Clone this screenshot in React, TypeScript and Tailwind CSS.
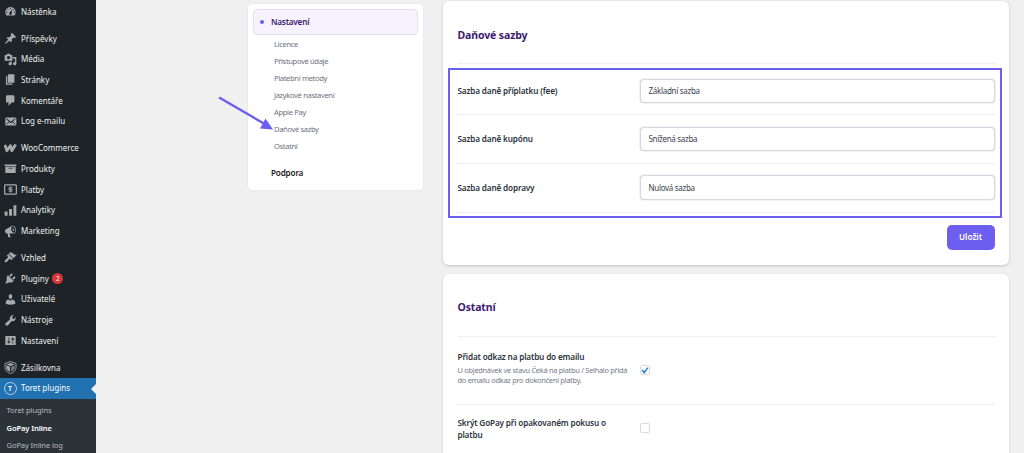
import type { ReactNode } from 'react';

const icons: Record<string, ReactNode> = {
  dashboard: (
    <path fillRule="evenodd" d="M3.76 16h12.48c1.1-1.37 1.76-3.11 1.76-5 0-4.42-3.58-8-8-8s-8 3.58-8 8c0 1.89.66 3.63 1.76 5zM10 4c.55 0 1 .45 1 1s-.45 1-1 1-1-.45-1-1 .45-1 1-1zM6 6c.55 0 1 .45 1 1s-.45 1-1 1-1-.45-1-1 .45-1 1-1zm8 0c.55 0 1 .45 1 1s-.45 1-1 1-1-.45-1-1 .45-1 1-1zm-5.37 5.55L12 7v6c0 1.1-.9 2-2 2s-2-.9-2-2c0-.57.24-1.08.63-1.45zM4 10c.55 0 1 .45 1 1s-.45 1-1 1-1-.45-1-1 .45-1 1-1zm12 0c.55 0 1 .45 1 1s-.45 1-1 1-1-.45-1-1 .45-1 1-1z" />
  ),
  pin: (
    <path d="M10.44 3.02l1.82-1.82 6.36 6.35-1.83 1.82c-1.05-.68-2.48-.57-3.41.36l-.75.75c-.92.93-1.04 2.35-.35 3.41l-1.83 1.82-2.41-2.41-2.8 2.79c-.42.42-3.38 2.71-3.8 2.29s1.86-3.39 2.28-3.81l2.79-2.79L4.1 9.36l1.83-1.82c1.05.69 2.48.57 3.4-.36l.75-.75c.93-.92 1.05-2.35.36-3.41z" />
  ),
  media: (
    <path fillRule="evenodd" d="M13 11V4c0-.55-.45-1-1-1h-1.67L9 1H5L3.67 3H2c-.55 0-1 .45-1 1v7c0 .55.45 1 1 1h10c.55 0 1-.45 1-1zM7 4.5c1.38 0 2.5 1.12 2.5 2.5S8.38 9.5 7 9.5 4.5 8.38 4.5 7 5.62 4.5 7 4.5zM14 6h5v10.5c0 1.38-1.12 2.5-2.5 2.5S14 17.88 14 16.5s1.12-2.5 2.5-2.5c.17 0 .34.02.5.05V9h-3V6zm-4 8.05V13h2v3.5c0 1.38-1.12 2.5-2.5 2.5S7 17.88 7 16.5 8.12 14 9.5 14c.17 0 .34.02.5.05z" />
  ),
  page: <path d="M6 15V2h10v13H6zm-1 1h8v2H3V5h2v11z" />,
  comment: <path d="M5 2h9c1.1 0 2 .9 2 2v7c0 1.1-.9 2-2 2h-2l-5 5v-5H5c-1.1 0-2-.9-2-2V4c0-1.1.9-2 2-2z" />,
  email: (
    <path fillRule="evenodd" d="M19 14.5v-9c0-.83-.67-1.5-1.5-1.5H3.49c-.83 0-1.5.67-1.5 1.5v9c0 .83.67 1.5 1.5 1.5H17.5c.83 0 1.5-.67 1.5-1.5zm-1.31-9.11c.33.33.15.67-.03.84L13.6 9.95l3.9 4.06c.12.14.2.36.06.51-.13.16-.43.15-.56.05l-4.37-3.73-2.14 1.95-2.13-1.95-4.37 3.73c-.13.1-.43.11-.56-.05-.14-.15-.06-.37.06-.51l3.9-4.06-4.06-3.72c-.18-.17-.36-.51-.03-.84s.67-.17.95.07l6.24 5.04 6.25-5.04c.28-.24.62-.4.95-.07z" />
  ),
  woo: (
    <g fill="none" stroke="currentColor" strokeWidth="4.2" strokeLinejoin="round">
      <path d="M1.5 4.5L4.5 13.5l5.5-8L12 13.5l6-9.5" />
    </g>
  ),
  archive: <path fillRule="evenodd" d="M19 4v2H1V4h18zM2 7h16v10H2V7zm11 3V9H7v1h6z" />,
  money: (
    <>
      <rect x="1" y="3" width="18" height="14" rx="1" fill="none" stroke="currentColor" strokeWidth="1.9" />
      <path fill="none" stroke="currentColor" strokeWidth="1.8" d="M12.8 7.4H9a1.3 1.3 0 0 0 0 2.6h2a1.3 1.3 0 0 1 0 2.6H7.2M10 5.5v2M10 12.5v2" />
    </>
  ),
  chart: <path d="M1 11.5h4.5V18H1zM7.8 7.5h4.5V18H7.8zM14.6 2H19v16h-4.4z" />,
  megaphone: (
    <path fillRule="evenodd" d="M18.15 5.94c.46 1.62.38 3.22-.02 4.48-.42 1.28-1.26 2.18-2.3 2.48-.3.08-.7.1-1.02.1h-6.8l2.22 5.5c.02.14-.06.26-.14.34-.08.1-.24.16-.34.16H6.95c-.1 0-.26-.06-.34-.16-.08-.08-.16-.2-.14-.34l-1-5.5H4.25c-.5.06-1.08-.2-1.56-.64s-.88-1.08-1.06-1.88c-.24-.8-.2-1.56-.02-2.2.18-.62.58-1.08 1.08-1.32l9-5.4c.3-.2.6-.38.98-.46 1.04-.3 2.24.1 3.22.98s1.84 2.24 2.26 3.86zm-2.58 5.98c.4-.1.74-.34 1.02-.7.58-.7.86-1.76.86-3.04 0-.64-.1-1.3-.28-1.98-.34-1.36-1.02-2.5-1.78-3.24s-1.68-1.1-2.46-.88c-.82.22-1.4.96-1.7 2-.32 1.04-.28 2.36.06 3.72.38 1.36 1 2.5 1.8 3.24.78.74 1.62 1.1 2.48.88zM13 5.5c1.2-.3 2.2.4 2.5 1.6s-.2 2.3-1.3 2.6z" />
  ),
  brush: (
    <path d="M14.48 11.06L7.41 3.99l1.5-1.5c.5-.56 2.3-.47 3.51.32 1.21.8 1.43 1.28 2.91 2.1 1.18.64 2.45 1.26 4.45.85zm-.71.71L6.7 4.7 4.93 6.47c-.39.39-.39 1.02 0 1.41l1.06 1.06c.39.39.39 1.03 0 1.42-.6.6-1.43 1.11-2.21 1.69-.35.26-.7.53-1.01.84C1.43 14.23.4 16.08 1.4 17.07c.99 1 2.84-.03 4.18-1.36.31-.31.58-.66.85-1.02.57-.78 1.08-1.61 1.69-2.21.39-.39 1.02-.39 1.41 0l1.06 1.06c.39.39 1.02.39 1.41 0z" />
  ),
  plug: (
    <path d="M13.11 4.36L9.87 7.6 8 5.73l3.24-3.24c.35-.34 1.05-.2 1.56.32.52.51.66 1.21.31 1.55zm-8 1.77l.91-1.12 9.01 9.01-1.19.84c-.71.71-2.63 1.16-3.82 1.16H6.14L4.9 17.26c-.59.59-1.54.59-2.12 0-.59-.58-.59-1.53 0-2.12l1.24-1.24v-3.88c0-1.13.4-3.19 1.09-3.89zm7.26 3.97l3.24-3.24c.34-.35 1.04-.21 1.55.31.52.51.66 1.21.31 1.55l-3.24 3.25z" />
  ),
  user: (
    <path d="M10 9.25c-2.27 0-2.73-3.44-2.73-3.44C7 4.02 7.82 2 9.97 2c2.16 0 2.98 2.02 2.71 3.81 0 0-.41 3.44-2.68 3.44zm0 2.57L12.72 10c2.39 0 4.52 2.33 4.52 4.53v2.49s-3.65 1.13-7.24 1.13c-3.65 0-7.24-1.13-7.24-1.13v-2.49c0-2.25 1.94-4.48 4.47-4.48z" />
  ),
  wrench: (
    <path d="M16.68 9.77c-1.34 1.34-3.3 1.67-4.95.99l-5.41 6.52c-.99.99-2.59.99-3.58 0s-.99-2.59 0-3.57l6.52-5.42c-.68-1.65-.35-3.61.99-4.95 1.28-1.28 3.12-1.62 4.72-1.06l-2.89 2.89 2.82 2.82 2.86-2.87c.53 1.58.18 3.39-1.08 4.65z" />
  ),
  settings: (
    <path fillRule="evenodd" d="M18 16V4c0-.55-.45-1-1-1H3c-.55 0-1 .45-1 1v12c0 .55.45 1 1 1h14c.55 0 1-.45 1-1zM8 11h1c.55 0 1 .45 1 1s-.45 1-1 1H8v1.5c0 .28-.22.5-.5.5s-.5-.22-.5-.5V13H6c-.55 0-1-.45-1-1s.45-1 1-1h1V5.5c0-.28.22-.5.5-.5s.5.22.5.5V11zm5-2h-1c-.55 0-1-.45-1-1s.45-1 1-1h1V5.5c0-.28.22-.5.5-.5s.5.22.5.5V7h1c.55 0 1 .45 1 1s-.45 1-1 1h-1v5.5c0 .28-.22.5-.5.5s-.5-.22-.5-.5V9z" />
  ),
  shield: (
    <>
      <path fill="none" stroke="currentColor" strokeWidth="1.4" d="M10 .8l8.5 3v6.5c0 4-3.5 7-8.5 9.2-5-2.2-8.5-5.2-8.5-9.2V3.8z" />
      <path d="M10 3l6.2 2.2L10 7.6 3.8 5.2zM3.5 6.5l5.7 2.2v8C5.5 14.8 3.5 12.6 3.5 10z" />
      <path opacity=".6" d="M16.5 6.5l-5.7 2.2v8c3.7-1.9 5.7-4.1 5.7-6.7z" />
    </>
  ),
};

interface MenuItem {
  label: string;
  icon: string;
  badge?: number;
}

const menuGroups: MenuItem[][] = [
  [{ label: 'Nástěnka', icon: 'dashboard' }],
  [
    { label: 'Příspěvky', icon: 'pin' },
    { label: 'Média', icon: 'media' },
    { label: 'Stránky', icon: 'page' },
    { label: 'Komentáře', icon: 'comment' },
    { label: 'Log e-mailu', icon: 'email' },
  ],
  [
    { label: 'WooCommerce', icon: 'woo' },
    { label: 'Produkty', icon: 'archive' },
    { label: 'Platby', icon: 'money' },
    { label: 'Analytiky', icon: 'chart' },
    { label: 'Marketing', icon: 'megaphone' },
  ],
  [
    { label: 'Vzhled', icon: 'brush' },
    { label: 'Pluginy', icon: 'plug', badge: 2 },
    { label: 'Uživatelé', icon: 'user' },
    { label: 'Nástroje', icon: 'wrench' },
    { label: 'Nastavení', icon: 'settings' },
  ],
];

const sections = ['Licence', 'Přístupové údaje', 'Platební metody', 'Jazykové nastavení', 'Apple Pay', 'Daňové sazby', 'Ostatní'];

const taxRates = [
  { label: 'Sazba daně příplatku (fee)', value: 'Základní sazba' },
  { label: 'Sazba daně kupónu', value: 'Snížená sazba' },
  { label: 'Sazba daně dopravy', value: 'Nulová sazba' },
];

function Icon({ name }: { name: string }) {
  return (
    <svg viewBox="0 0 20 20" fill="currentColor" className="h-[13px] w-[13px] shrink-0 text-[#a7aaad]">
      {icons[name]}
    </svg>
  );
}

function SidebarItem({ label, icon, badge }: MenuItem) {
  return (
    <li className="flex h-[20.7px] items-center gap-[4.5px] pl-[3.5px] text-[8px] text-[#f0f0f1]">
      <Icon name={icon} />
      <span>{label}</span>
      {badge && (
        <span className="-ml-px flex h-[11px] w-[11px] items-center justify-center rounded-full bg-[#d63638] text-[6.5px] text-white">
          {badge}
        </span>
      )}
    </li>
  );
}

function Sidebar() {
  return (
    <aside className="flex w-24 shrink-0 flex-col bg-[#1d2327] pt-[1.2px]">
      <div className="flex flex-col gap-[6.3px]">
        {menuGroups.map((group) => (
          <ul key={group[0].label}>
            {group.map((item) => (
              <SidebarItem key={item.label} {...item} />
            ))}
          </ul>
        ))}
        <ul>
          <SidebarItem label="Zásilkovna" icon="shield" />
          <li className="relative flex h-[20.7px] items-center gap-[4.5px] bg-[#2271b1] pl-[3.5px] text-[8px] text-white">
            <span className="flex h-[13px] w-[13px] items-center justify-center rounded-full border border-[#b9d6ee] text-[7px] leading-none font-semibold">T</span>
            <span>Toret plugins</span>
            <span className="absolute right-0 top-[5.5px] border-y-[5px] border-r-[5px] border-y-transparent border-r-[#f0f0f1]" />
          </li>
        </ul>
      </div>
      <ul className="flex-1 bg-[#2c3338] pl-[6.5px] pt-[3.8px] text-[7.6px] tracking-[-0.12px] text-[#b4b9be]">
        <li className="flex h-[17.2px] items-center">Toret plugins</li>
        <li className="flex h-[17.2px] items-center font-semibold text-white">GoPay Inline</li>
        <li className="flex h-[17.2px] items-center">GoPay Inline log</li>
      </ul>
    </aside>
  );
}

function SettingsNav() {
  return (
    <nav className="mt-1 h-[186px] w-[175px] shrink-0 rounded-[4px] bg-white px-[5px] pt-[5px] shadow-[0_0_2px_rgba(0,0,0,0.08)]">
      <div className="flex h-[26px] items-center rounded-[4px] border border-[#e4defc] bg-[#f6f3fe] pl-[6.5px] text-[8.2px] font-semibold tracking-[-0.22px] text-[#3b1a6e]">
        <span className="mr-[7px] h-1 w-1 rounded-full bg-[#6c5ff0]" />
        Nastavení
      </div>
      <ul className="pl-[21.5px] pt-[1.2px] text-[7.6px] tracking-[-0.36px] text-[#6c7383]">
        {sections.map((section) => (
          <li key={section} className="flex h-[16.95px] items-center">{section}</li>
        ))}
      </ul>
      <div className="mt-[12px] pl-[18.5px] text-[8.2px] font-semibold tracking-[-0.2px] text-[#222]">Podpora</div>
    </nav>
  );
}

function Checkbox({ checked }: { checked?: boolean }) {
  return (
    <span className="flex h-[10px] w-[10px] items-center justify-center rounded-[2px] border border-[#d9dbe0] bg-white">
      {checked && (
        <svg viewBox="0 0 20 20" className="h-[11px] w-[11px] shrink-0" fill="#2583d0">
          <path d="M15.2 3.9l2 1.4-6.9 10.2H8.6L4.5 10l1.7-1.7 3.2 3z" />
        </svg>
      )}
    </span>
  );
}

export default function App() {
  return (
    <div className="flex h-[453px] w-[1024px] overflow-hidden bg-[#f0f0f1] font-['Noto_Sans','Open_Sans',sans-serif]">
      <Sidebar />
      <main className="relative flex flex-1 items-start pl-[151.5px]">
        <SettingsNav />
        <div className="ml-[20.5px] w-[566px] shrink-0">
          <section className="mt-px h-[264px] rounded-[6px] bg-white px-[14.5px] shadow-[0_1px_3px_rgba(0,0,0,0.2)]">
            <h2 className="flex h-[63px] items-center border-b border-[#eeeff1] pt-[7px] text-[10.5px] font-bold tracking-[-0.12px] text-[#3b1a6e]">
              Daňové sazby
            </h2>
            <div className="-ml-[10px] -mr-[7.5px] mt-[3.5px] h-[150.5px] border-2 border-[#6c5ff0] pl-2 pr-[5.5px]">
              {taxRates.map((rate) => (
                <div key={rate.label} className="flex h-[48.8px] items-center border-b border-[#eeeff1] first:h-[45.5px] first:pb-[2px]">
                  <span className="w-[182.5px] text-[8.2px] font-semibold tracking-[-0.16px] text-[#2c3340]">{rate.label}</span>
                  <div className="flex h-[24.5px] flex-1 items-center rounded-[4px] border border-[#d5d8de] bg-white px-[7.5px] text-[8px] tracking-[-0.3px] text-[#3c434a] shadow-[0_0_1.5px_rgba(0,0,0,0.25)]">
                    {rate.value}
                  </div>
                </div>
              ))}
            </div>
            <div className="flex justify-end pt-[6.5px]">
              <button className="h-[25.5px] w-12 rounded-[5px] bg-[#6c5ff0] text-[8.2px] font-semibold text-white">Uložit</button>
            </div>
          </section>
          <section className="mt-[8.5px] h-[220px] rounded-[6px] bg-white px-[14.5px] shadow-[0_1px_3px_rgba(0,0,0,0.15)]">
            <h2 className="flex h-[63px] items-center border-b border-[#eeeff1] pt-[6px] text-[10.5px] font-bold tracking-[-0.15px] text-[#3b1a6e]">
              Ostatní
            </h2>
            <div className="flex h-[68px] items-center border-b border-[#eeeff1]">
              <div className="w-[182px] pb-1">
                <div className="mb-[2px] text-[8.2px] leading-[14px] font-semibold tracking-[-0.16px] text-[#2c3340]">Přidat odkaz na platbu do emailu</div>
                <p className="whitespace-nowrap text-[7.4px] leading-[9.7px] tracking-[-0.27px] text-[#737a87]">
                  U objednávek ve stavu Čeká na platbu / Selhalo přidá
                  <br />
                  do emailu odkaz pro dokončení platby.
                </p>
              </div>
              <Checkbox checked />
            </div>
            <div className="flex h-[47px] items-center">
              <div className="w-[182px] pt-[2px] text-[8.2px] leading-[12px] font-semibold tracking-[-0.16px] text-[#2c3340]">
                Skrýt GoPay při opakovaném pokusu o
                <br />
                platbu
              </div>
              <Checkbox />
            </div>
          </section>
        </div>
        {/* callout arrow pointing at the tax rates link */}
        <svg className="absolute left-[122px] top-[94px] h-[38px] w-[56px]" viewBox="0 0 56 38">
          <path d="M2 4L45 29" stroke="#6c5ff0" strokeWidth="2.4" strokeLinecap="round" />
          <path d="M55 35.5L42 34.5l5.5-10z" fill="#6c5ff0" />
        </svg>
      </main>
    </div>
  );
}
